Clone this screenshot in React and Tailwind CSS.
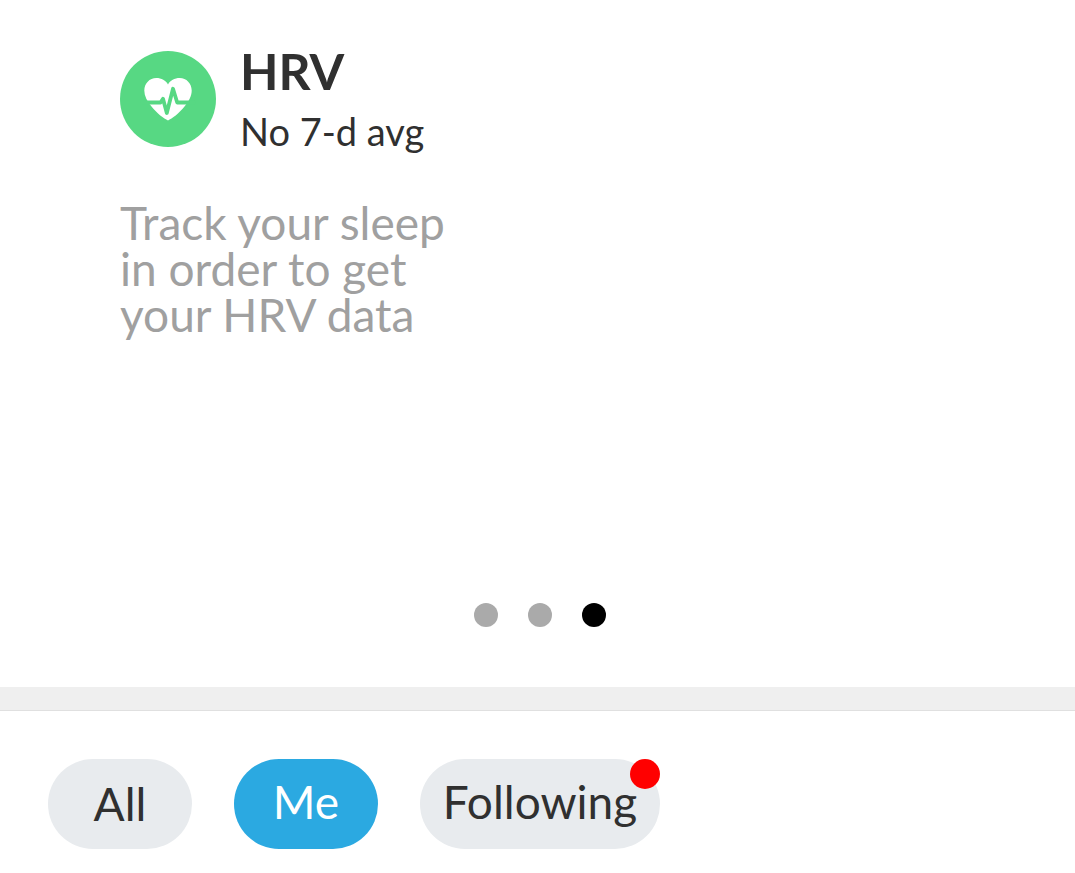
import React, { useState } from 'react';

const slides = ['Sleep', 'Resting HR', 'HRV'];

const HeartPulseIcon = () => (
  <svg viewBox="0 0 96 96" className="w-24 h-24 shrink-0" aria-hidden="true">
    <circle cx="48" cy="48" r="48" fill="#57d883" />
    <path
      d="M48 69.5C44 67.5 37 62.5 31.5 55.5C27 50 24.3 45 24.3 39.5C24.3 32.5 29.5 27 36.3 27C41.3 27 46 29.6 48 33.5C50 29.6 54.7 27 59.7 27C66.5 27 71.7 32.5 71.7 39.5C71.7 45 69 50 64.5 55.5C59 62.5 52 67.5 48 69.5Z"
      fill="#fff"
    />
    <path
      d="M22 51.5H40.5L43 47.8L46.8 62L53 37.8L57.2 51.5H74"
      fill="none"
      stroke="#57d883"
      strokeWidth="3.8"
      strokeLinecap="round"
      strokeLinejoin="round"
    />
  </svg>
);

const App = () => {
  const [slide, setSlide] = useState(2);
  const [filter, setFilter] = useState('Me');

  const pill = (name) =>
    filter === name ? 'bg-[#2ba9e1] text-white' : 'bg-[#e8ebee] text-[#303030]';

  return (
    <div className="min-h-screen bg-white font-['Lato',sans-serif] text-[#303030]">
      <section className="pt-12 pb-15">
        <div className="px-30">
          <div className="flex items-start gap-6">
            <div className="pt-[3px]">
              <HeartPulseIcon />
            </div>
            <div>
              <h2 className="text-[50px] leading-[46px] font-bold">HRV</h2>
              <p className="mt-3 text-[38px] leading-[50px]">No 7-d avg</p>
            </div>
          </div>

          <p className="mt-11 min-h-[403px] text-[46px] leading-[46px] text-[#a0a0a0]">
            Track your sleep
            <br />
            in order to get
            <br />
            your HRV data
          </p>
        </div>

        {/* carousel dots */}
        <div className="flex justify-center gap-[30px] pl-1">
          {slides.map((name, i) => (
            <button
              key={name}
              type="button"
              aria-label={name}
              onClick={() => setSlide(i)}
              className={`size-6 rounded-full ${slide === i ? 'bg-black' : 'bg-[#aaaaaa]'}`}
            />
          ))}
        </div>
      </section>

      <div className="h-6 bg-[#efefef] border-b border-[#e0e0e0]" />

      {/* feed filters */}
      <div className="flex gap-[42px] px-12 pt-12 pb-6 text-[46px] leading-[48px]">
        <button
          type="button"
          onClick={() => setFilter('All')}
          className={`h-[90px] w-36 rounded-full ${pill('All')}`}
        >
          All
        </button>
        <button
          type="button"
          onClick={() => setFilter('Me')}
          className={`h-[90px] w-36 pb-1 rounded-full ${pill('Me')}`}
        >
          Me
        </button>
        <button
          type="button"
          onClick={() => setFilter('Following')}
          className={`relative h-[90px] w-60 pb-1 rounded-full ${pill('Following')}`}
        >
          Following
          <span className="absolute top-0 right-0 size-[30px] rounded-full bg-[#ff0000]" />
        </button>
      </div>
    </div>
  );
};

export default App;
